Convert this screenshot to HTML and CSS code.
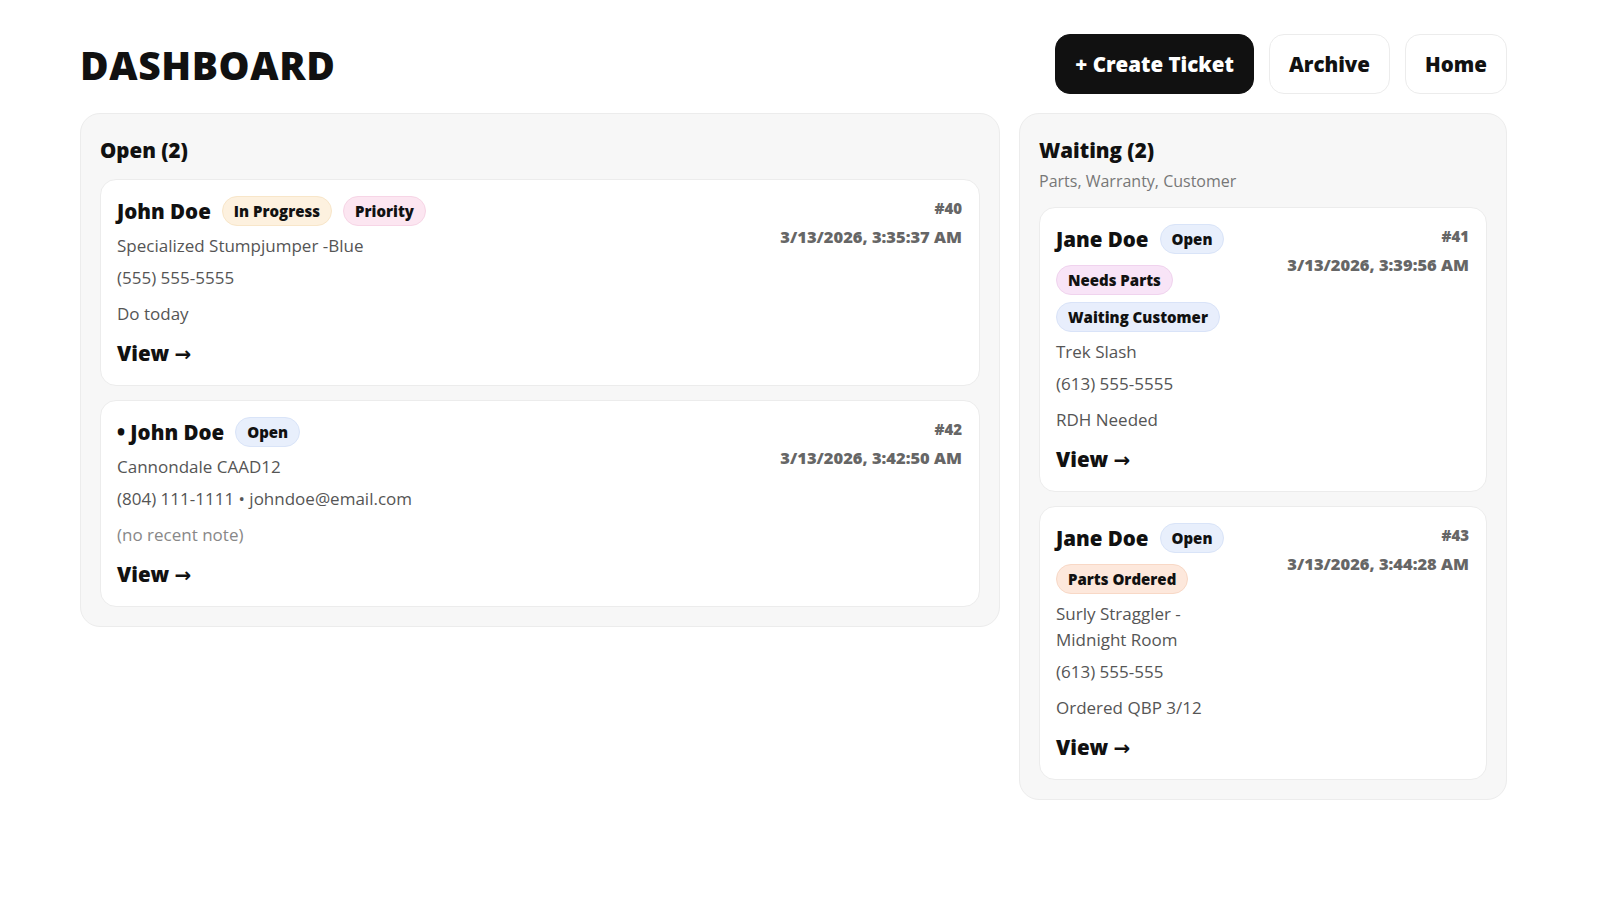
FILE: index.html
```html
<!DOCTYPE html>
<html lang="en">
<head>
    <meta charset="UTF-8">
    <meta name="viewport" content="width=device-width, initial-scale=1.0">
    <title>Dashboard</title>
    <link rel="stylesheet" href="styles.css">
</head>
<body>
    <div class="page">
        <header class="topbar">
            <h1>DASHBOARD</h1>
            <nav class="actions">
                <a class="btn btn-dark" href="#">+ Create Ticket</a>
                <a class="btn" href="#">Archive</a>
                <a class="btn" href="#">Home</a>
            </nav>
        </header>

        <main class="board">
            <section class="column">
                <h2>Open (2)</h2>

                <div class="ticket">
                    <div class="info">
                        <div class="title-row">
                            <span class="name">John Doe</span>
                            <span class="badge progress">In Progress</span>
                            <div class="tags">
                                <span class="badge priority">Priority</span>
                            </div>
                        </div>
                        <p class="bike">Specialized Stumpjumper -Blue</p>
                        <p class="contact">(555) 555-5555</p>
                        <p class="note">Do today</p>
                        <a class="view" href="#">View <span class="arrow">→</span></a>
                    </div>
                    <div class="meta">
                        <div class="num">#40</div>
                        <div class="date">3/13/2026, 3:35:37 AM</div>
                    </div>
                </div>

                <div class="ticket">
                    <div class="info">
                        <div class="title-row">
                            <span class="name">• John Doe</span>
                            <span class="badge open">Open</span>
                        </div>
                        <p class="bike">Cannondale CAAD12</p>
                        <p class="contact">(804) 111-1111 • johndoe@email.com</p>
                        <p class="note empty">(no recent note)</p>
                        <a class="view" href="#">View <span class="arrow">→</span></a>
                    </div>
                    <div class="meta">
                        <div class="num">#42</div>
                        <div class="date">3/13/2026, 3:42:50 AM</div>
                    </div>
                </div>
            </section>

            <section class="column">
                <h2>Waiting (2)</h2>
                <p class="sub">Parts, Warranty, Customer</p>

                <div class="ticket">
                    <div class="info">
                        <div class="title-row">
                            <span class="name">Jane Doe</span>
                            <span class="badge open">Open</span>
                            <div class="tags">
                                <span class="badge parts">Needs Parts</span>
                                <span class="badge customer">Waiting Customer</span>
                            </div>
                        </div>
                        <p class="bike">Trek Slash</p>
                        <p class="contact">(613) 555-5555</p>
                        <p class="note">RDH Needed</p>
                        <a class="view" href="#">View <span class="arrow">→</span></a>
                    </div>
                    <div class="meta">
                        <div class="num">#41</div>
                        <div class="date">3/13/2026, 3:39:56 AM</div>
                    </div>
                </div>

                <div class="ticket">
                    <div class="info">
                        <div class="title-row">
                            <span class="name">Jane Doe</span>
                            <span class="badge open">Open</span>
                            <div class="tags">
                                <span class="badge ordered">Parts Ordered</span>
                            </div>
                        </div>
                        <p class="bike">Surly Straggler - Midnight Room</p>
                        <p class="contact">(613) 555-555</p>
                        <p class="note">Ordered QBP 3/12</p>
                        <a class="view" href="#">View <span class="arrow">→</span></a>
                    </div>
                    <div class="meta">
                        <div class="num">#43</div>
                        <div class="date">3/13/2026, 3:44:28 AM</div>
                    </div>
                </div>
            </section>
        </main>
    </div>
</body>
</html>
```

FILE: styles.css
```css
* {
    margin: 0;
    padding: 0;
    box-sizing: border-box;
}
body {
    font-family: "Open Sans", "Noto Sans", sans-serif;
    color: #111;
    background: #fff;
}
a {
    color: inherit;
    text-decoration: none;
}
.page {
    padding: 34px 93px 40px 80px;
}
.topbar {
    display: flex;
    align-items: center;
    justify-content: space-between;
    margin-bottom: 19px;
}
.topbar h1 {
    font-size: 39px;
    font-weight: 800;
    letter-spacing: 0.6px;
    line-height: 1;
}
.actions {
    display: flex;
    gap: 15px;
}
.btn {
    display: flex;
    align-items: center;
    height: 60px;
    padding: 0 19px;
    border: 1px solid #ececec;
    border-radius: 15px;
    background: #fff;
    font-size: 20.5px;
    font-weight: 800;
}
.btn-dark {
    background: #111;
    border-color: #111;
    color: #fff;
}
.board {
    display: grid;
    grid-template-columns: 1fr 488px;
    gap: 19px;
    align-items: start;
}
.column {
    background: #f7f7f7;
    border: 1px solid #ececec;
    border-radius: 20px;
    padding: 21px 19px 19px 19px;
    display: flex;
    flex-direction: column;
    gap: 14px;
}
.column h2 {
    font-size: 20.5px;
    font-weight: 800;
    line-height: 30px;
}
.sub {
    font-size: 16px;
    color: #777;
    line-height: 22px;
    margin-top: -9px;
    margin-bottom: 1px;
}
.ticket {
    background: #fff;
    border: 1px solid #ececec;
    border-radius: 16px;
    padding: 16px 17px 16px 16px;
    display: flex;
    gap: 44px;
}
.info {
    flex: 1;
    min-width: 0;
}
.title-row {
    display: flex;
    flex-wrap: wrap;
    align-items: center;
    gap: 11px 11px;
    margin-bottom: 7px;
}
.tags {
    display: flex;
    flex-wrap: wrap;
    gap: 7px 12px;
}
.name {
    font-size: 20.5px;
    font-weight: 800;
    line-height: 30px;
}
.badge {
    display: inline-block;
    height: 30px;
    line-height: 28px;
    padding: 0 11px;
    border-radius: 999px;
    border: 1px solid transparent;
    font-size: 15px;
    font-weight: 800;
}
.progress {
    background: #fdf1df;
    border-color: #f8e6c9;
}
.priority {
    background: #fce6f1;
    border-color: #f7d5e6;
}
.open {
    background: #e8effc;
    border-color: #d9e4f8;
}
.parts {
    background: #f8e4f7;
    border-color: #f0d3ee;
}
.customer {
    background: #e8eefc;
    border-color: #d9e3f8;
}
.ordered {
    background: #fde8dc;
    border-color: #f8d8c6;
}
.bike, .contact, .note {
    font-size: 17px;
    line-height: 26px;
    color: #555;
}
.contact {
    margin-top: 6px;
}
.note {
    margin-top: 10px;
}
.note.empty {
    color: #888;
}
.view {
    display: inline-block;
    margin-top: 11px;
    font-size: 20.5px;
    font-weight: 800;
    line-height: 30px;
}
.arrow {
    font-family: "DejaVu Sans", sans-serif;
    font-size: 20px;
    font-weight: 700;
}
.meta {
    flex: none;
    text-align: right;
    color: #666;
    font-weight: 800;
    white-space: nowrap;
}
.num {
    font-size: 15px;
    line-height: 20px;
    margin-top: 2px;
}
.date {
    font-size: 16.5px;
    line-height: 22px;
    margin-top: 8px;
}
```
